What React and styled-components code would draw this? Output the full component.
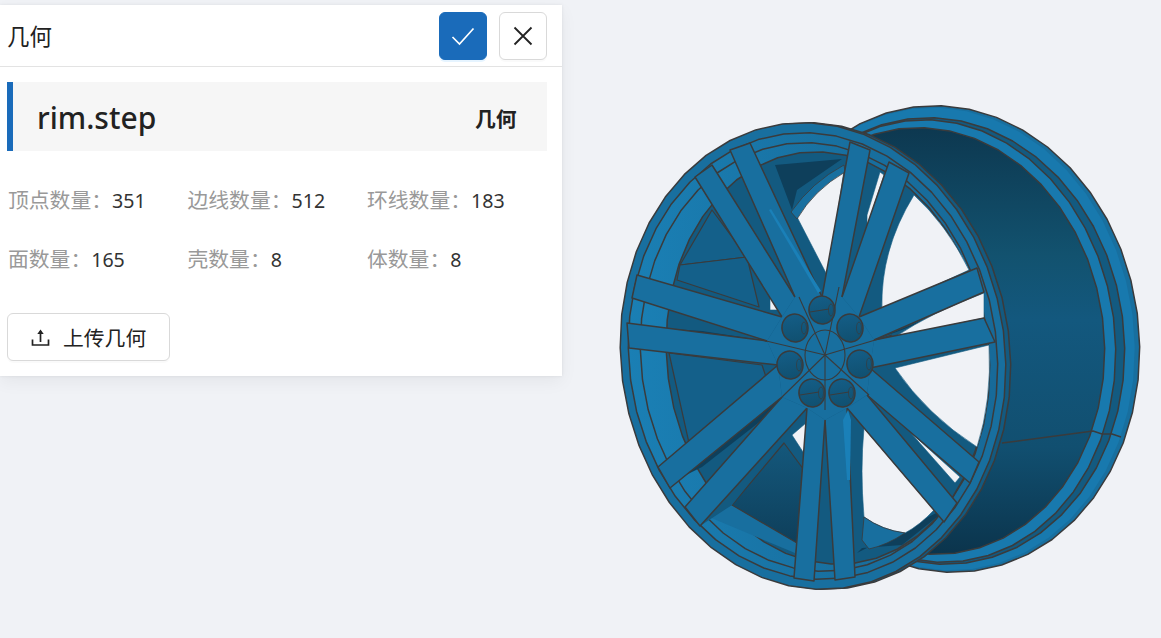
import React from 'react';
import styled, { createGlobalStyle } from 'styled-components';

const blue = '#1a6bba';
const pageBg = '#f0f2f6';
const line = '#3a3b3c';
const light = '#1879ae';
const medium = '#186f9f';
const dark = '#135a80';
const darkest = '#0e3f5b';

const GlobalStyle = createGlobalStyle`
  html, body {
    margin: 0;
    height: 100%;
    background: ${pageBg};
    font-family: "Noto Sans", "Noto Sans CJK SC", sans-serif;
    overflow: hidden;
  }
`;

const Page = styled.div`
  display: flex;
  align-items: flex-start;
  width: 1161px;
  height: 638px;
`;

const Panel = styled.section`
  flex: 0 0 560px;
  height: 371px;
  margin-top: 5px;
  background: #fff;
  box-shadow: 0 0 3px rgba(0, 0, 0, 0.08), 0 6px 16px rgba(0, 0, 0, 0.05);
`;

const Header = styled.header`
  display: flex;
  align-items: center;
  gap: 12px;
  height: 62px;
  padding: 0 15px 0 7px;
  border-bottom: 1px solid #e3e3e3;
  box-sizing: border-box;
`;

const HeaderTitle = styled.h1`
  flex: 1;
  margin: 0;
  font-size: 22.4px;
  font-weight: 400;
  color: #222;
`;

const IconButton = styled.button`
  display: flex;
  align-items: center;
  justify-content: center;
  width: 48px;
  height: 48px;
  padding: 0;
  border-radius: 6px;
  color: ${props => (props.$primary ? '#fff' : '#222')};
  background: ${props => (props.$primary ? blue : '#fff')};
  border: 1px solid ${props => (props.$primary ? blue : '#d9d9d9')};
  box-shadow: 0 2px 0 ${props => (props.$primary ? 'rgba(5, 145, 255, 0.1)' : 'rgba(0, 0, 0, 0.02)')};
`;

const Body = styled.div`
  padding: 15px 15px 0 7px;
`;

const Banner = styled.div`
  display: flex;
  align-items: center;
  justify-content: space-between;
  height: 69px;
  padding: 2px 30px 0 24px;
  background: #f6f6f6;
  border-left: 6px solid ${blue};
  box-sizing: border-box;
`;

const FileName = styled.span`
  font-size: 30px;
  font-weight: 500;
  color: #222;
`;

const FileType = styled.span`
  font-size: 20.8px;
  font-weight: 700;
  color: #222;
`;

const Stats = styled.dl`
  display: grid;
  grid-template-columns: repeat(3, 179.5px);
  grid-auto-rows: 59px;
  margin: 20px 0 0 1px;
  align-items: center;
`;

const Stat = styled.div`
  display: flex;
  font-size: 20.8px;
  line-height: 59px;
`;

const StatLabel = styled.dt`
  color: #999;
`;

const StatValue = styled.dd`
  margin: 0;
  color: #333;
  font-size: 19.6px;
`;

const UploadButton = styled.button`
  display: flex;
  align-items: center;
  gap: 13px;
  height: 48px;
  margin-top: 24px;
  padding: 0 23px 0 23px;
  font-family: inherit;
  font-size: 20.8px;
  color: #222;
  background: #fff;
  border: 1px solid #d9d9d9;
  border-radius: 6px;
  box-shadow: 0 2px 0 rgba(0, 0, 0, 0.02);
`;

const Viewport = styled.svg`
  flex: 0 0 601px;
  display: block;
`;

// faceted ellipse, the model is a tessellated mesh so the outline isn't smooth
const ell = (cx, cy, rx, ry, n = 44, tilt = -7.5) => {
  const t = (tilt * Math.PI) / 180;
  const pts = [];
  for (let i = 0; i < n; i++) {
    const a = (i / n) * Math.PI * 2;
    const x = rx * Math.cos(a);
    const y = ry * Math.sin(a);
    pts.push(`${(cx + x * Math.cos(t) - y * Math.sin(t)).toFixed(1)},${(cy + x * Math.sin(t) + y * Math.cos(t)).toFixed(1)}`);
  }
  return pts.join(' ');
};

const p = arr => arr.map(a => a.join(',')).join(' ');

const notch = {
  ga: [780, 317], ab: [820, 297], bc: [857, 317], cd: [868, 368],
  de: [845, 408], ef: [805, 408], fg: [776, 365],
};

const crotch = {
  a: [793, 297], b: [840, 297], c: [872, 340], d: [865, 395],
  e: [823, 420], f: [780, 397], g: [765, 341],
};

const spokes = [
  [notch.ga, [693, 177], [710, 165], crotch.a],
  [crotch.a, [728, 150], [748, 143], notch.ab],
  [notch.ab, [848, 142], [868, 150], crotch.b],
  [crotch.b, [887, 162], [907, 173], notch.bc],
  [notch.bc, [975, 268], [982, 292], crotch.c],
  [crotch.c, [982, 318], [993, 342], notch.cd],
  [notch.cd, [977, 462], [968, 483], crotch.d],
  [crotch.d, [955, 503], [942, 522], notch.de],
  [notch.de, [853, 577], [833, 580], crotch.e],
  [crotch.e, [812, 581], [792, 578], notch.ef],
  [notch.ef, [698, 526], [683, 507], crotch.f],
  [crotch.f, [668, 488], [656, 467], notch.fg],
  [notch.fg, [627, 348], [625, 323], crotch.g],
  [crotch.g, [630, 298], [635, 275], notch.ga],
];

const hub = [
  notch.ga, crotch.a, notch.ab, crotch.b, notch.bc, crotch.c, notch.cd,
  crotch.d, notch.de, crotch.e, notch.ef, crotch.f, notch.fg, crotch.g,
];

const windows = [
  'M795 217Q812 188 842 170L827 272L825 275Z',
  'M912 195Q945 225 967 270L880 310Q878 250 912 195Z',
  'M982 293L982 318L893 337Q930 312 982 293Z',
  'M893 368L987 345Q990 400 975 447Q925 415 893 368Z',
  'M908 432L953 483L958 477Z',
  'M862 428L932 510Q918 525 903 533Q880 530 862 517Q858 470 862 428Z',
  'M790 435L804 423L803 455Z',
  'M768 295L778 310L768 310Z',
  'M878 172L882 175L865 227L865 215Z',
];

const slivers = [
  { d: 'M678 478L780 397L760 420L700 467Z', fill: darkest },
  { d: 'M643 327L700 331L765 341L700 338Z', fill: darkest },
  { d: 'M650 280L690 292L775 315L720 306Z', fill: darkest },
  { d: 'M872 340L978 297L900 330Z', fill: darkest },
  { d: 'M773 165L840 159L795 190L790 210Z', fill: darkest },
  { d: 'M855 553L950 505L900 545L860 548Z', fill: darkest },
];

const facets = [
  'M710 210L678 265L745 257Z',
  'M678 265L675 280L757 307L745 257Z',
  'M667 353L760 365L765 380L687 443Z',
];

const highlights = [
  'M767 210L769 209L819 291L816 293Z',
  'M841 420L846 410L849 420L848 480L845 480Z',
];

const lugs = [
  [820, 310, true], [793, 328], [848, 328], [788, 365], [858, 364], [810, 393, true], [840, 393, true],
];

const starEnds = [
  [797, 297], [837, 287], [890, 335], [867, 395], [823, 410], [780, 397], [760, 340],
];

function Wheel() {
  return (
    <Viewport width="601" height="638" viewBox="560 0 601 638">
      <defs>
        <linearGradient id="barrel" x1="0" y1="0" x2="0" y2="1">
          <stop offset="0" stopColor="#0d3850" />
          <stop offset="0.3" stopColor="#12526f" />
          <stop offset="0.45" stopColor="#13587e" />
          <stop offset="0.75" stopColor="#114f70" />
          <stop offset="1" stopColor="#0b344c" />
        </linearGradient>
        <linearGradient id="rimFace" x1="0" y1="0" x2="1" y2="0">
          <stop offset="0" stopColor="#1a7fb4" />
          <stop offset="0.6" stopColor={medium} />
          <stop offset="1" stopColor="#176a99" />
        </linearGradient>
        <linearGradient id="lowerWell" x1="0" y1="0" x2="0" y2="1">
          <stop offset="0" stopColor="#14587c" />
          <stop offset="1" stopColor="#0e3f5b" />
        </linearGradient>
        <linearGradient id="lug" x1="0" y1="0" x2="0" y2="1">
          <stop offset="0" stopColor="#145d86" />
          <stop offset="1" stopColor="#105070" />
        </linearGradient>
      </defs>

      <g stroke={line} strokeWidth="1.5" strokeLinejoin="round">
        {/* rear flange and barrel */}
        <polygon points={ell(942, 339, 195, 234)} fill={medium} />
        <polygon points={ell(940, 339, 192, 232)} fill={light} stroke="none" />
        <polygon points={ell(935, 341, 187, 224)} fill={dark} />
        <polygon points={ell(932, 341, 181, 222)} fill={light} />
        <polygon points={ell(925, 341, 177, 214)} fill="url(#barrel)" />
        <path d="M1000 443L1091 431L1100 434L1110 434L1119 437" fill="none" />

        {/* front flange */}
        <polygon points={ell(815, 356, 193, 234)} fill={dark} />
        <polygon points={ell(811, 356, 192, 234)} fill={medium} />
        <polygon points={ell(811, 356, 184, 224)} fill="url(#rimFace)" />
        <polygon points={ell(813, 357, 174, 215)} fill="url(#rimFace)" />
        <polygon points={ell(825, 358, 160, 207)} fill={dark} />

        {/* well seen through the spokes */}
        {facets.map(d => (
          <path key={d} d={d} fill="#14608a" strokeWidth="1.2" />
        ))}
        <path d="M707 517L793 553L795 543L730 505Z" fill={medium} stroke="none" />
        <path d="M730 505L782 443L802 470L795 543Z" fill="url(#lowerWell)" strokeWidth="1.2" />
        <path d="M698 526L730 505L803 412Z" fill={dark} stroke="none" />
        {slivers.map(s => (
          <path key={s.d} d={s.d} fill={s.fill} stroke="none" />
        ))}
        {windows.map(d => (
          <path key={d} d={d} fill={pageBg} strokeWidth="0.6" stroke={dark} />
        ))}
        <path d="M789 212Q810 182 842 165L843 172Q812 190 795 219Z" fill={medium} strokeWidth="0.8" />
        <path d="M862 517Q880 530 903 533Q885 545 867 549L860 540Z" fill={medium} strokeWidth="0.8" />

        {/* spokes */}
        {spokes.map((s, i) => (
          <polyline key={i} points={p(s)} fill={medium} />
        ))}
        <polygon points={p(hub)} fill={medium} stroke="none" />
        {highlights.map(d => (
          <path key={d} d={d} fill="#1a80b8" stroke="none" />
        ))}

        {/* hub */}
        {starEnds.map(([x, y]) => (
          <line key={x} x1="823" y1="355" x2={x} y2={y} strokeWidth="1.1" />
        ))}
        <ellipse cx="823" cy="355" rx="20" ry="25" fill="none" strokeWidth="1.1" />
        {lugs.map(([x, y, split]) => (
          <g key={x}>
            <ellipse cx={x} cy={y} rx="13" ry="14" fill="url(#lug)" transform={`rotate(-10 ${x} ${y})`} />
            <ellipse cx={x + 9} cy={y} rx="2.5" ry="6" fill="none" strokeWidth="0.7" />
            {split && <line x1={x - 12} y1={y + 2} x2={x + 7} y2={y - 1} strokeWidth="1" />}
          </g>
        ))}
      </g>
    </Viewport>
  );
}

const stats = [
  ['顶点数量', '351'], ['边线数量', '512'], ['环线数量', '183'],
  ['面数量', '165'], ['壳数量', '8'], ['体数量', '8'],
];

export default function App() {
  return (
    <>
      <GlobalStyle />
      <Page>
        <Panel>
          <Header>
            <HeaderTitle>几何</HeaderTitle>
            <IconButton $primary aria-label="确定">
              <svg width="26" height="26" viewBox="0 0 26 26" fill="none" stroke="currentColor" strokeWidth="1.7">
                <path d="M2.5 14L9.5 21L23.5 5.5" />
              </svg>
            </IconButton>
            <IconButton aria-label="关闭">
              <svg width="20" height="20" viewBox="0 0 20 20" fill="none" stroke="currentColor" strokeWidth="1.8">
                <path d="M1.5 1.5L18.5 18.5M18.5 1.5L1.5 18.5" />
              </svg>
            </IconButton>
          </Header>
          <Body>
            <Banner>
              <FileName>rim.step</FileName>
              <FileType>几何</FileType>
            </Banner>
            <Stats>
              {stats.map(([label, value]) => (
                <Stat key={label}>
                  <StatLabel>{label}：</StatLabel>
                  <StatValue>{value}</StatValue>
                </Stat>
              ))}
            </Stats>
            <UploadButton>
              <svg width="19" height="19" viewBox="0 0 19 19" fill="none" stroke="currentColor" strokeWidth="1.7">
                <path d="M1.5 11.5V17H17.5V11.5" />
                <path d="M9.5 14V3" />
                <path d="M9.5 1.5L12.7 6H6.3Z" fill="currentColor" stroke="none" />
              </svg>
              上传几何
            </UploadButton>
          </Body>
        </Panel>
        <Wheel />
      </Page>
    </>
  );
}
